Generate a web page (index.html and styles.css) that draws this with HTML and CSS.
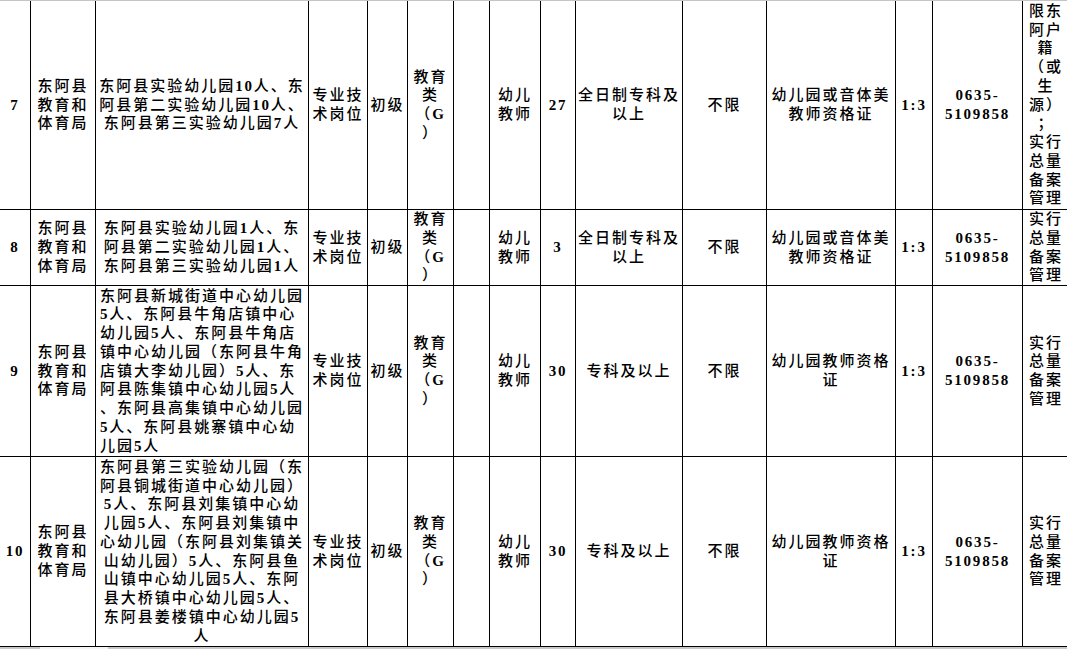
FILE: index.html
```html
<!DOCTYPE html>
<html lang="zh-CN">
<head>
<meta charset="utf-8">
<title>东阿县教育和体育局招聘岗位</title>
<link rel="stylesheet" href="styles.css">
</head>
<body>
<div class="page">
  <div class="topline"></div>
  <div class="sheet">
    <!-- row 7 -->
    <div class="c num"><div class="t">7</div></div>
    <div class="c"><div class="t">东阿县<br>教育和<br>体育局</div></div>
    <div class="c"><div class="t">东阿县实验幼儿园<span class="d">10</span>人、东<br>阿县第二实验幼儿园<span class="d">10</span>人、<br>东阿县第三实验幼儿园<span class="d">7</span>人</div></div>
    <div class="c"><div class="t">专业技<br>术岗位</div></div>
    <div class="c"><div class="t">初级</div></div>
    <div class="c"><div class="t">教育<br>类<br>（<span class="d">G</span><br>）</div></div>
    <div class="c"></div>
    <div class="c"><div class="t">幼儿<br>教师</div></div>
    <div class="c num"><div class="t">27</div></div>
    <div class="c"><div class="t">全日制专科及<br>以上</div></div>
    <div class="c"><div class="t">不限</div></div>
    <div class="c"><div class="t">幼儿园或音体美<br>教师资格证</div></div>
    <div class="c num"><div class="t">1:3</div></div>
    <div class="c num"><div class="t">0635-<br>5109858</div></div>
    <div class="c"><div class="t">限东<br>阿户<br>籍<br>（或<br>生<br>源）<br>；<br>实行<br>总量<br>备案<br>管理</div></div>

    <!-- row 8 -->
    <div class="c num"><div class="t">8</div></div>
    <div class="c"><div class="t">东阿县<br>教育和<br>体育局</div></div>
    <div class="c"><div class="t">东阿县实验幼儿园<span class="d">1</span>人、东<br>阿县第二实验幼儿园<span class="d">1</span>人、<br>东阿县第三实验幼儿园<span class="d">1</span>人</div></div>
    <div class="c"><div class="t">专业技<br>术岗位</div></div>
    <div class="c"><div class="t">初级</div></div>
    <div class="c"><div class="t">教育<br>类<br>（<span class="d">G</span><br>）</div></div>
    <div class="c"></div>
    <div class="c"><div class="t">幼儿<br>教师</div></div>
    <div class="c num"><div class="t">3</div></div>
    <div class="c"><div class="t">全日制专科及<br>以上</div></div>
    <div class="c"><div class="t">不限</div></div>
    <div class="c"><div class="t">幼儿园或音体美<br>教师资格证</div></div>
    <div class="c num"><div class="t">1:3</div></div>
    <div class="c num"><div class="t">0635-<br>5109858</div></div>
    <div class="c"><div class="t">实行<br>总量<br>备案<br>管理</div></div>

    <!-- row 9 -->
    <div class="c num"><div class="t">9</div></div>
    <div class="c"><div class="t">东阿县<br>教育和<br>体育局</div></div>
    <div class="c left"><div class="t">东阿县新城街道中心幼儿园<br><span class="d">5</span>人、东阿县牛角店镇中心<br>幼儿园<span class="d">5</span>人、东阿县牛角店<br>镇中心幼儿园（东阿县牛角<br>店镇大李幼儿园）<span class="d">5</span>人、东<br>阿县陈集镇中心幼儿园<span class="d">5</span>人<br>、东阿县高集镇中心幼儿园<br><span class="d">5</span>人、东阿县姚寨镇中心幼<br>儿园<span class="d">5</span>人</div></div>
    <div class="c"><div class="t">专业技<br>术岗位</div></div>
    <div class="c"><div class="t">初级</div></div>
    <div class="c"><div class="t">教育<br>类<br>（<span class="d">G</span><br>）</div></div>
    <div class="c"></div>
    <div class="c"><div class="t">幼儿<br>教师</div></div>
    <div class="c num"><div class="t">30</div></div>
    <div class="c"><div class="t">专科及以上</div></div>
    <div class="c"><div class="t">不限</div></div>
    <div class="c"><div class="t">幼儿园教师资格<br>证</div></div>
    <div class="c num"><div class="t">1:3</div></div>
    <div class="c num"><div class="t">0635-<br>5109858</div></div>
    <div class="c"><div class="t">实行<br>总量<br>备案<br>管理</div></div>

    <!-- row 10 -->
    <div class="c num"><div class="t">10</div></div>
    <div class="c"><div class="t">东阿县<br>教育和<br>体育局</div></div>
    <div class="c"><div class="t">东阿县第三实验幼儿园（东<br>阿县铜城街道中心幼儿园）<br><span class="d">5</span>人、东阿县刘集镇中心幼<br>儿园<span class="d">5</span>人、东阿县刘集镇中<br>心幼儿园（东阿县刘集镇关<br>山幼儿园）<span class="d">5</span>人、东阿县鱼<br>山镇中心幼儿园<span class="d">5</span>人、东阿<br>县大桥镇中心幼儿园<span class="d">5</span>人、<br>东阿县姜楼镇中心幼儿园<span class="d">5</span><br>人</div></div>
    <div class="c"><div class="t">专业技<br>术岗位</div></div>
    <div class="c"><div class="t">初级</div></div>
    <div class="c"><div class="t">教育<br>类<br>（<span class="d">G</span><br>）</div></div>
    <div class="c"></div>
    <div class="c"><div class="t">幼儿<br>教师</div></div>
    <div class="c num"><div class="t">30</div></div>
    <div class="c"><div class="t">专科及以上</div></div>
    <div class="c"><div class="t">不限</div></div>
    <div class="c"><div class="t">幼儿园教师资格<br>证</div></div>
    <div class="c num"><div class="t">1:3</div></div>
    <div class="c num"><div class="t">0635-<br>5109858</div></div>
    <div class="c"><div class="t">实行<br>总量<br>备案<br>管理</div></div>
  </div>
  <div class="bottombar"><span class="gap"></span></div>
</div>
</body>
</html>
```

FILE: styles.css
```css
html, body {
  margin: 0;
  padding: 0;
  background: #fff;
}
body {
  width: 1067px;
  height: 649px;
  overflow: hidden;
}
.page {
  width: 1067px;
  height: 649px;
  overflow: hidden;
  display: flex;
  flex-direction: column;
}
.topline {
  height: 1px;
  flex: none;
  background: #c4c4c4;
}
.sheet {
  flex: none;
  width: 1069px;
  display: grid;
  grid-template-columns: 30px 64px 212px 58px 39px 45px 35px 50px 34px 106px 83px 128px 36px 89px 46px;
  grid-template-rows: 208px 75px 170px 189px;
  gap: 1px;
  padding-bottom: 1px;
  background: #000;
}
.c {
  background: #fff;
  display: flex;
  align-items: center;
  justify-content: center;
  text-align: center;
  white-space: nowrap;
  font-family: "Liberation Serif", "Noto Sans CJK SC", serif;
  font-weight: 500;
  font-size: 15px;
  line-height: 18.75px;
  letter-spacing: 2px;
  color: #000;
}
.t {
  flex: none;
}
.c.num {
  font-weight: bold;
  letter-spacing: 1.8px;
}
.d {
  font-weight: bold;
  letter-spacing: 1.8px;
}
.c.left {
  justify-content: flex-start;
  text-align: left;
  padding-left: 4px;
}
.bottombar {
  flex: none;
  height: 3px;
  background: #c8c8c8;
  position: relative;
}
.bottombar .gap {
  position: absolute;
  left: 40px;
  top: 0;
  width: 68px;
  height: 3px;
  background: #f4f4f4;
}
```
